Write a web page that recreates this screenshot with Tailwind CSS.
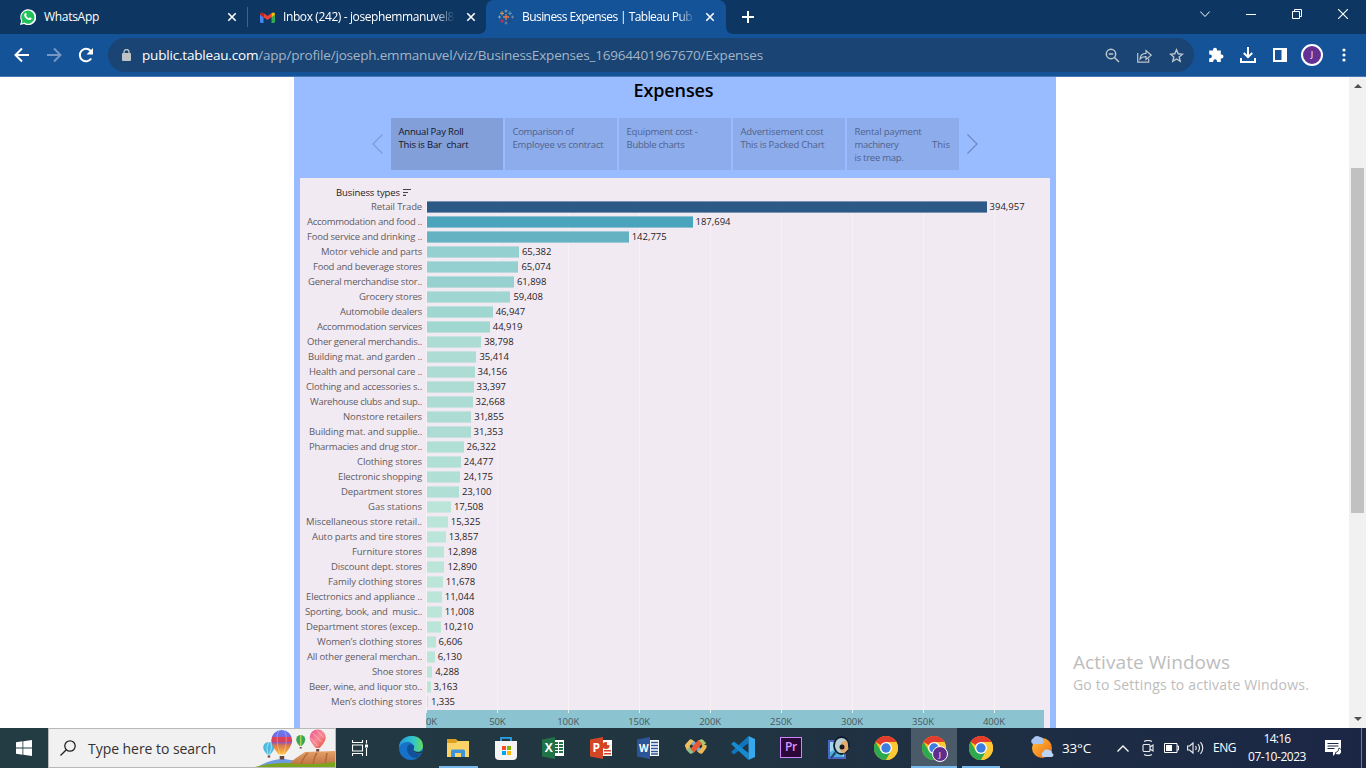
<!DOCTYPE html>
<html lang="en">
<head>
<meta charset="utf-8">
<title>Business Expenses | Tableau Public</title>
<script src="https://cdn.jsdelivr.net/npm/@tailwindcss/browser@4"></script>
</head>
<body class="w-[1366px] h-[768px] overflow-hidden bg-white font-['Open_Sans','Noto_Sans',sans-serif] text-white">
<svg class="hidden">
  <symbol id="close" viewBox="0 0 10 10"><path d="M1.3 1.3l7.4 7.4M8.7 1.3L1.3 8.7" stroke="currentColor" stroke-width="1.6" fill="none"/></symbol>
  <symbol id="chrome" viewBox="0 0 24 24">
    <circle cx="12" cy="12" r="12" fill="#fbc116"/>
    <path d="M12 12L1.6 6A12 12 0 0 1 22.4 6H12z" fill="#e33b2e"/>
    <path d="M1.6 6A12 12 0 0 0 12 24l5.2-9L12 12 6.8 15z" fill="#2da94f"/>
    <path d="M22.4 6A12 12 0 0 1 12 24l5.2-9A6 6 0 0 0 12 6z" fill="#fcc934"/>
    <circle cx="12" cy="12" r="6" fill="#fff"/><circle cx="12" cy="12" r="4.7" fill="#3c7de0"/>
  </symbol>
</svg>
<div class="flex flex-col w-[1366px] h-[768px]">

  <!-- Tab strip -->
  <header class="flex h-[34px] shrink-0 items-center bg-[#0d3662] text-[12px]">
    <div class="flex items-center w-[247px] h-full pl-5">
      <svg class="w-4 h-4 shrink-0" viewBox="0 0 16 16"><path d="M0 16l1.2-4A8 8 0 1 1 4 15z" fill="#fff"/><path d="M1.6 14.4l.8-2.6A6.6 6.6 0 1 1 4.2 13.6z" fill="#20c05a"/><path d="M5 4.2c.5-.5 1-.4 1.200 0l.6 1.400-.7 1c.6 1.300 1.500 2.100 2.800 2.600l.9-1 1.600.8c.3.200.2 1.300-.6 1.800C8.300 12.200 3.400 8 4.300 5.200z" fill="#fff"/></svg>
      <span class="ml-2" data-w="55">WhatsApp</span>
      <svg class="w-[10px] h-[10px] ml-auto mr-[10px]"><use href="#close"/></svg>
    </div>
    <div class="w-px h-5 bg-[#3f6286]"></div>
    <div class="flex items-center w-[238px] h-full pl-3">
      <svg class="w-[15px] h-[11px] shrink-0" viewBox="0 0 15 11"><path d="M0 2v7.500q0 1.500 1.500 1.500h2V4.500z" fill="#4285f4"/><path d="M15 2v7.500q0 1.500-1.500 1.500h-2V4.500z" fill="#34a853"/><path d="M3.500 1v4.200L7.500 8l4-2.800V1l-4 3z" fill="#ea4335"/><path d="M0 2.500C0 0 2 0 3.500 1v4.200L0 2.700z" fill="#c5221f"/><path d="M15 2.500C15 0 13 0 11.500 1v4.200L15 2.700z" fill="#fbbc04"/></svg>
      <div class="ml-2 w-[172px] overflow-hidden whitespace-nowrap [mask-image:linear-gradient(to_right,black_88%,transparent_100%)]"><span class="inline-block" data-w="171">Inbox (242) - josephemmanuvel8</span></div>
      <svg class="w-[10px] h-[10px] ml-auto mr-[10px]"><use href="#close"/></svg>
    </div>
    <div class="relative flex items-center w-[240px] h-full pl-[12px] rounded-t-lg bg-[#155399]">
      <svg class="absolute -left-2 bottom-0 w-2 h-2" viewBox="0 0 8 8"><path d="M8 0v8H0Q8 8 8 0z" fill="#155399"/></svg>
      <svg class="absolute -right-2 bottom-0 w-2 h-2" viewBox="0 0 8 8"><path d="M0 0v8h8Q0 8 0 0z" fill="#155399"/></svg>
      <svg class="w-4 h-4 shrink-0" viewBox="0 0 16 16" fill="none"><path d="M8 5v6M5 8h6" stroke="#f07840" stroke-width="1.300"/><path d="M4 2.300v4M2 4.300h4" stroke="#e9a24d"/><path d="M12 2.300v4M10 4.300h4" stroke="#5f9aab"/><path d="M4 10v4M2 12h4" stroke="#d52e46"/><path d="M12 10v4M10 12h4" stroke="#244775"/><path d="M8 .5v3M6.500 2h3M1.500 6.500v3M0 8h3" stroke="#8aa7ad"/><path d="M14.500 6.500v3M13 8h3M8 12.500v3M6.500 14h3" stroke="#7385a8"/></svg>
      <div class="ml-2 w-[172px] overflow-hidden whitespace-nowrap [mask-image:linear-gradient(to_right,black_90%,transparent_101%)]"><span class="inline-block" data-w="170">Business Expenses | Tableau Pub</span></div>
      <svg class="w-[10px] h-[10px] ml-auto mr-[11px]"><use href="#close"/></svg>
    </div>
    <svg class="w-3 h-3 ml-4" viewBox="0 0 12 12"><path d="M6 0v12M0 6h12" stroke="#fff" stroke-width="2"/></svg>
    <div class="flex items-center h-full ml-auto mr-[18px] pb-[6px] gap-[36px]">
      <svg class="w-[10px] h-[10px]" viewBox="0 0 10 10" fill="none" stroke="#fff"><path d="M.3 2.500L5 7.500l4.700-5"/></svg>
      <svg class="w-[10px] h-[10px]" viewBox="0 0 10 10"><path d="M0 5.500h10" stroke="#fff"/></svg>
      <svg class="w-[10px] h-[10px]" viewBox="0 0 10 10" fill="none" stroke="#fff"><path d="M.5 2.500h7v7h-7zM2.500 2.500v-2h7v7h-2"/></svg>
      <svg class="w-[10px] h-[10px]" viewBox="0 0 10 10"><path d="M0 0l10 10M10 0L0 10" stroke="#fff" stroke-width="1.100"/></svg>
    </div>
  </header>

  <!-- Toolbar -->
  <nav class="flex h-[43px] shrink-0 items-center border-b border-[#4779b8] bg-[#155399]">
    <svg class="w-4 h-4 ml-[14px]" viewBox="0 0 16 16" fill="none" stroke="#fff" stroke-width="2"><path d="M15 8H2M8 1.500L1.500 8 8 14.500"/></svg>
    <svg class="w-4 h-4 ml-4" viewBox="0 0 16 16" fill="none" stroke="#7398c5" stroke-width="2"><path d="M1 8h13M8 1.500L14.500 8 8 14.500"/></svg>
    <svg class="w-4 h-4 ml-4" viewBox="0 0 16 16" fill="none"><path d="M13.200 11.500A6.200 6.200 0 1 1 12.500 3.700L14 5.500" stroke="#fff" stroke-width="2"/><path d="M15 1v6.500H8.500z" fill="#fff"/></svg>
    <div class="flex items-center w-[1086px] h-[34px] ml-[14px] rounded-full bg-[#194473] text-[13.500px] text-[#a3b4c7]">
      <svg class="w-[9px] h-[12px] ml-[14px] shrink-0" viewBox="0 0 9 12"><rect y="4" width="9" height="8" rx="1" fill="#bfc3c8"/><path d="M2 4.500V3a2.500 2.500 0 0 1 5 0v1.500" fill="none" stroke="#bfc3c8" stroke-width="1.300"/></svg>
      <span class="ml-[11px] whitespace-nowrap" data-w="621"><span class="text-white">public.tableau.com</span>/app/profile/joseph.emmanuvel/viz/BusinessExpenses_16964401967670/Expenses</span>
      <div class="flex items-center gap-[17px] ml-auto mr-[10px]">
        <svg class="w-[15px] h-[15px]" viewBox="0 0 15 15" fill="none" stroke="#bdc5ce" stroke-width="1.500"><circle cx="6" cy="6" r="4.700"/><path d="M9.500 9.500l4.500 4.500M3.800 6h4.400"/></svg>
        <svg class="w-[15px] h-[15px]" viewBox="0 0 15 15" fill="none" stroke="#bdc5ce" stroke-width="1.200"><path d="M.7 5v9.200h11V10.500"/><path d="M3 11c.4-4 2.500-5.500 6-5.600V2.500l5.200 4.700L9 11.500V8.600C6.500 8.500 4.700 9 3 11z"/></svg>
        <svg class="w-[15px] h-[15px]" viewBox="0 0 15 15" fill="none" stroke="#bdc5ce" stroke-width="1.400"><path d="M7.500 1.800l1.700 4 4.300.4-3.300 2.800 1 4.300-3.700-2.300-3.700 2.300 1-4.300L1.500 6.200l4.300-.4z"/></svg>
      </div>
    </div>
    <svg class="w-4 h-4 ml-[14px]" viewBox="0 0 16 16"><path d="M1.200 3.500H5V2.800a2 2 0 0 1 4 0v.7h3.800v4h.7a2 2 0 0 1 0 4h-.7V15H9v-.8a1.900 1.900 0 0 0-3.800 0v.8h-4v-3.800H2a1.900 1.900 0 0 0 0-3.800h-.8z" fill="#fff"/></svg>
    <svg class="w-4 h-4 ml-4" viewBox="0 0 16 16" fill="none" stroke="#fff" stroke-width="2"><path d="M8 0v10M3.800 6L8 10.200 12.200 6M1 11v4h14v-4"/></svg>
    <svg class="w-[14px] h-[14px] ml-[17px]" viewBox="0 0 14 14"><path d="M0 0h14v14H0zM2 2v10h6.500V2z" fill="#fff" fill-rule="evenodd"/></svg>
    <div class="flex items-center justify-center w-[22px] h-[22px] ml-[14px] rounded-full border-2 border-white bg-[#643093] text-[9px]">J</div>
    <svg class="w-[4px] h-[14px] ml-[19px]" viewBox="0 0 4 14" fill="#fff"><circle cx="2" cy="2" r="1.600"/><circle cx="2" cy="7" r="1.600"/><circle cx="2" cy="12" r="1.600"/></svg>
  </nav>

  <!-- Page -->
  <main class="relative flex h-[651px] shrink-0 overflow-hidden bg-white">
    <section class="flex flex-col items-center w-[762px] h-full ml-[294px] bg-[#99bbff]">
      <h1 class="h-[41px] pr-[3px] text-[18px] leading-[26px] font-semibold text-black"><span class="inline-block" data-w="80">Expenses</span></h1>
      <div class="flex items-center h-[52px] text-[9.500px] leading-[13px] text-[#4f638b]">
        <svg class="w-[11px] h-5 mr-[8px]" viewBox="0 0 11 20" fill="none" stroke="#7f9ed7" stroke-width="1.400"><path d="M10.500.5L1 10l9.500 9.500"/></svg>
        <div class="flex gap-[2px] h-full whitespace-pre">
          <div class="w-[112px] pt-[7px] pl-[7.500px] bg-[#829fd9] text-[#10151f]"><div><span data-w="65">Annual Pay Roll</span></div><div><span data-w="70">This is Bar  chart</span></div></div>
          <div class="w-[112px] pt-[7px] pl-[7.500px] bg-[#8daceb]"><div><span data-w="61">Comparison of</span></div><div><span data-w="91">Employee vs contract</span></div></div>
          <div class="w-[112px] pt-[7px] pl-[7.500px] bg-[#8daceb]"><div><span data-w="71">Equipment cost -</span></div><div><span data-w="58">Bubble charts</span></div></div>
          <div class="w-[112px] pt-[7px] pl-[7.500px] bg-[#8daceb]"><div><span data-w="83">Advertisement cost</span></div><div><span data-w="84">This is Packed Chart</span></div></div>
          <div class="w-[112px] pt-[7px] pl-[7.500px] bg-[#8daceb]"><div><span data-w="67">Rental payment</span></div><div class="flex justify-between pr-[9px]"><span data-w="44">machinery</span><span data-w="18">This</span></div><div><span data-w="49">is tree map.</span></div></div>
        </div>
        <svg class="w-[11px] h-5 ml-[8px]" viewBox="0 0 11 20" fill="none" stroke="#708bc0" stroke-width="1.400"><path d="M.5.500L10 10 .5 19.500"/></svg>
      </div>
      <div class="flex flex-col w-[750px] flex-1 mt-2 bg-[#f2eaf3] text-[9.500px]">
        <div class="flex items-center h-[22px] pt-[8px] pl-9 text-[#222]"><span data-w="64">Business types</span>
          <svg class="w-2 h-2 ml-[3px] -mt-[2px]" viewBox="0 0 8 8" stroke="#444" stroke-width="1.200"><path d="M0 1.500h8M0 4.500h5M0 7.400h3"/></svg></div>
        <div class="relative h-[510px]">
          <div id="grid" class="absolute left-[126px] inset-y-0 w-[618px]"></div>
          <div id="rows" class="relative flex flex-col"></div>
        </div>
        <div class="flex-1 pl-[126px] pr-[6px]"><div id="axis" class="relative h-full overflow-hidden bg-[#8bc3d1] text-[#48575c]"></div></div>
      </div>
    </section>
    <aside class="absolute left-[1073px] top-[573px] text-[#bdbdbd] whitespace-nowrap">
      <div class="text-[19px] leading-[25px]"><span data-w="157">Activate Windows</span></div>
      <div class="text-[14px] leading-[20px]"><span data-w="236">Go to Settings to activate Windows.</span></div>
    </aside>
    <div class="flex flex-col items-center w-[17px] h-full ml-auto bg-[#f1f1f1]">
      <svg class="w-[8px] h-[4px] mt-[7px]" viewBox="0 0 8 4"><path d="M4 0l4 4H0z" fill="#505050"/></svg>
      <div class="w-[13px] h-[345px] mt-[80px] bg-[#c1c1c1]"></div>
      <svg class="w-[8px] h-[4px] mt-auto mb-[7px]" viewBox="0 0 8 4"><path d="M0 0h8L4 4z" fill="#505050"/></svg>
    </div>
  </main>

  <!-- Taskbar -->
  <footer class="flex h-10 shrink-0 items-center bg-linear-to-r from-[#233c43] via-[#213541] to-[#1b2645]">
    <div class="flex w-12 shrink-0 justify-center"><svg class="w-4 h-4" viewBox="0 0 16 16" fill="#fff"><path d="M0 2.200l6.500-.9v6.200H0zM7.300 1.200L16 0v7.500H7.300zM0 8.400h6.500v6.300L0 13.800zM7.300 8.400H16V16l-8.700-1.200z"/></svg></div>
    <div class="flex items-center w-[288px] shrink-0 h-full border border-[#b9b9b9] bg-[#f1f1f1] text-[#333] text-[14px]">
      <svg class="w-4 h-4 ml-[11px]" viewBox="0 0 16 16" fill="none" stroke="#222" stroke-width="1.300"><circle cx="10" cy="6" r="5.200"/><path d="M6.300 9.700L.5 15.500"/></svg>
      <span class="ml-[12px] whitespace-nowrap" data-w="128">Type here to search</span>
      <svg class="w-[80px] h-[38px] ml-auto" viewBox="0 0 80 38">
        <defs>
          <linearGradient id="hill" x1="0" x2="0" y1="0" y2="1"><stop stop-color="#e5a268"/><stop offset="1" stop-color="#b96c3c"/></linearGradient>
          <linearGradient id="big" x1="0" x2="0" y1="0" y2="1"><stop stop-color="#5c7cf5"/><stop offset=".28" stop-color="#7a68e0"/><stop offset=".3" stop-color="#e0434e"/><stop offset=".48" stop-color="#d64263"/><stop offset=".5" stop-color="#8b56b8"/><stop offset=".62" stop-color="#d9774a"/><stop offset="1" stop-color="#ffc23a"/></linearGradient>
          <linearGradient id="pink" x1="0" x2="1" y1="0" y2="1"><stop stop-color="#ee4f88"/><stop offset=".5" stop-color="#f58a9c"/><stop offset="1" stop-color="#e8502f"/></linearGradient>
        </defs>
        <path d="M2 38q14-8 27-8l20 3v5z" fill="#6e9ade"/><path d="M34 35q5-5 10-8l6-4 30-1v16H34z" fill="url(#hill)"/><path d="M46 36q2-8 7-12M58 36q1-8 4-12M70 36l2-12" stroke="#b5673b" stroke-width="1.500" fill="none"/>
        <path d="M0 38q14-4 32-4 24 3 48-1v5z" fill="#79a61d"/>
        <g transform="translate(1.200 0)">
        <path d="M7 18.500a5.500 5.500 0 0 1 11 0q0 3-4 7h-3q-4-4-4-7z" fill="#4db8e0"/><path d="M12.500 13q-3 5-1 12M15 14q1 5-1.500 11" stroke="#a5e2ee" fill="none"/><path d="M11.500 26.500h2.500v2h-2.500z" fill="#69423a"/>
        <path d="M15 11.500a10.500 10.500 0 0 1 21 0q0 5-7.500 14h-6q-7.500-9-7.500-14z" fill="url(#big)"/><path d="M22.500 1.500q-4 9 1.500 24M28.500 1.500q4 9-1.500 24" stroke="#fff" stroke-opacity=".3" fill="none"/><path d="M23.500 27h4.500v3.500h-4.500z" fill="#69423a"/>
        <path d="M40 10.500a4.500 4.500 0 0 1 9 0q0 3-3.500 6.500h-2q-3.500-3.500-3.500-6.500z" fill="#39a75a"/><path d="M44.500 6v11" stroke="#b5cf4a" stroke-width="1.500"/><path d="M43.500 18h2v1.500h-2z" fill="#69423a"/>
        <path d="M53.500 8.500a8 8 0 0 1 16 0q0 4-6 10.500h-4q-6-6.500-6-10.500z" fill="url(#pink)"/><path d="M56.500 4l9 9M60.500 1.500l7 7M54.500 9l7 8" stroke="#ffc0b8" stroke-opacity=".7"/><path d="M60 20h3v2.500h-3z" fill="#69423a"/>
        </g>
      </svg>
    </div>
    <div class="grid grid-cols-[repeat(14,47.550px)] h-full w-[669px] pl-[3.300px] shrink-0 *:flex *:items-center *:justify-center *:h-full">
      <div class="pr-[6px]"><svg class="w-4 h-4" viewBox="0 0 16 16" fill="none" stroke="#fff" stroke-width="1.100"><path d="M.5 0v2.500h10V0M.5 5h10v6H.5zM.5 16v-2.500h10V16M14.500 0v3.500M14.500 8v8"/><path d="M13 4.500h3v3h-3z" fill="#fff" stroke="none"/></svg></div>
      <div><svg class="w-6 h-6" viewBox="0 0 24 24"><defs><linearGradient id="eg" x1="0" x2="1"><stop stop-color="#2697dd"/><stop offset=".6" stop-color="#32c7c9"/><stop offset="1" stop-color="#66dc58"/></linearGradient></defs><circle cx="12" cy="12" r="12" fill="#1671c9"/><path d="M0 11C1-3 24-4 24 10c0 5-5 7-9 5-2-1 0-2 0-4C14 5 4 4 0 11z" fill="url(#eg)"/><path d="M8 13c0-4 3-6 6-4 2 1 1 3 .5 4-1 4 4 5.500 8 4-1 2-3 4-5 5-6 0-9.500-5-9.500-9z" fill="#12509b"/><path d="M14.500 13c-1 3.500 4 5.500 9 3.500v-1.500c-4 2-9 1-9-2z" fill="#233a43"/></svg></div>
      <div class="relative"><svg class="w-[22px] h-[18px]" viewBox="0 0 22 18"><path d="M0 0h9l2 2h11v15H0z" fill="#dba021"/><path d="M0 4h9l1.500-2H22v16H0z" fill="#fdd367"/><path d="M4 18v-6q0-1.500 1.500-1.500h11Q18 10.500 18 12v6h-4v-4H8v4z" fill="#3b94da"/></svg><i class="absolute left-[4.500px] bottom-0 w-[39px] h-[2px] bg-[#76b9ed]"></i></div>
      <div><svg class="w-6 h-6" viewBox="0 0 24 24"><path d="M7 6V1.800h10V6" fill="none" stroke="#2aa4e8" stroke-width="1.800"/><path d="M1 5h22v15q0 4-4 4H5q-4 0-4-4z" fill="#f4f4f4"/><path d="M8 10h4v4H8z" fill="#f25022"/><path d="M13 10h4v4h-4z" fill="#7fba00"/><path d="M8 15h4v4H8z" fill="#00a4ef"/><path d="M13 15h4v4h-4z" fill="#ffb900"/></svg></div>
      <div><div class="relative flex items-center w-[22px] h-[22px]"><svg class="absolute inset-0" viewBox="0 0 22 22"><path d="M11 3h11v16H11z" fill="#fff"/><path d="M13 5h3v2h-3zm4 0h4v2h-4zm-4 3h3v2h-3zm4 0h4v2h-4zm-4 3h3v2h-3zm4 0h4v2h-4zm-4 3h3v2h-3zm4 0h4v2h-4z" fill="#207347"/><path d="M0 2.500L13 0v22L0 19.500z" fill="#207347"/></svg><b class="relative w-[13px] text-center text-[12px]">X</b></div></div>
      <div><div class="relative flex items-center w-[22px] h-[22px]"><svg class="absolute inset-0" viewBox="0 0 22 22"><path d="M11 3h11v16H11z" fill="#fff"/><path d="M14 13h7v1.500h-7zm0 3h7v1.500h-7z" fill="#d24625"/><circle cx="16" cy="8.500" r="3.500" fill="#d24625"/><path d="M17 4.500V8h3.500z" fill="#fff"/><path d="M0 2.500L13 0v22L0 19.500z" fill="#d24625"/></svg><b class="relative w-[13px] text-center text-[12px]">P</b></div></div>
      <div><div class="relative flex items-center w-[22px] h-[22px]"><svg class="absolute inset-0" viewBox="0 0 22 22"><path d="M11 3h11v16H11z" fill="#fff"/><path d="M14 5.500h7M14 8.500h7M14 11.500h7M14 14.500h7M14 17h7" stroke="#2b579a" stroke-width="1.300"/><path d="M0 2.500L13 0v22L0 19.500z" fill="#2b579a"/></svg><b class="relative w-[13px] text-center text-[10px]">W</b></div></div>
      <div class="pb-[3px]"><svg class="w-6 h-[15px]" viewBox="0 0 24 16" fill="none" stroke-width="4.500" stroke-linejoin="round"><path d="M9 4.500L6.500 2.500 2.500 7l2 4.500" stroke="#efc05c"/><path d="M3.500 10l3 3.500L9 12" stroke="#8cc08a"/><path d="M15 4l3-1.500 3 3.500" stroke="#a8c971"/><path d="M21 6.500v2l-3.500 5-3-2" stroke="#efb850"/><path d="M8.500 3.500l7 8.500" stroke="#78a9d8"/><path d="M8 12.500l8.500-9.500" stroke="#e95a32" stroke-width="5.500"/></svg></div>
      <div><svg class="w-6 h-6" viewBox="0 0 24 24"><path d="M17.500 0v7L3 18.500 0 16z" fill="#0f75bd"/><path d="M17.500 24v-7L3 5.500 0 8z" fill="#168bd2"/><path d="M17.500 0L24 3v18l-6.500 3z" fill="#35a8ee"/></svg></div>
      <div class="pb-[2px]"><div class="flex items-center justify-center w-[22px] h-[21px] border border-[#d083ff] bg-[#2c0838] text-[#da94ff] text-[12px] font-semibold"><span data-w="12">Pr</span></div></div>
      <div class="pb-px"><svg class="w-6 h-6" viewBox="0 0 24 24"><path d="M1 4h18v19H1z" fill="#4d65c8"/><path d="M3 6h14v15H3z" fill="#9ed9ee"/><path d="M3 16l6-3 8 8H3z" fill="#4db1d4"/><ellipse cx="14.500" cy="9.500" rx="7.500" ry="8.500" fill="#b9cfd6" stroke="#101b2b" stroke-width="1.800"/><path d="M13 10q2-6 7-5l1.500 8-4.500 4.500q-5-2-4-7.500z" fill="#e2a86c"/><circle cx="15" cy="11" r="2.500" fill="#17191d"/><path d="M8.500 16.500L4 22" stroke="#27427c" stroke-width="2"/></svg></div>
      <div><svg class="w-6 h-6"><use href="#chrome"/></svg></div>
      <div class="relative"><i class="absolute left-[1px] top-0 w-[46px] h-full bg-[#4b5a68] border-b-2 border-[#76b9ed]"></i><svg class="relative w-6 h-6"><use href="#chrome"/></svg><span class="absolute left-[22px] top-[18px] flex items-center justify-center w-4 h-4 rounded-full border-[1.500px] border-white bg-[#5f2d8e] text-[8px]">J</span></div>
      <div class="relative"><svg class="w-6 h-6"><use href="#chrome"/></svg><i class="absolute left-[4.500px] bottom-0 w-[38px] h-[2px] bg-[#76b9ed]"></i></div>
    </div>
    <div class="flex items-center w-[361px] h-full pl-[25px] text-[12px] shrink-0 whitespace-nowrap">
      <svg class="w-6 h-6 shrink-0 -mt-[3px]" viewBox="0 0 24 24"><defs><linearGradient id="sun" x1="0" y1="0" x2="1" y2="1"><stop stop-color="#ffc33b"/><stop offset="1" stop-color="#ed6813"/></linearGradient></defs><circle cx="12" cy="13" r="10" fill="url(#sun)"/><path d="M3 9a3 3 0 0 1 0-5.500Q6-.5 10 2q3 0 3 3 2 3-1 4z" fill="#a9c6f1"/><path d="M13 22a3 3 0 0 1 0-5q2-4 6-2 3 0 3 3 3 2 0 4z" fill="#bcd3f5"/></svg>
      <span class="ml-2 text-[13.500px]" data-w="29">33°C</span>
      <svg class="w-3 h-[7px] ml-[26px] shrink-0" viewBox="0 0 12 7" fill="none" stroke="#fff" stroke-width="1.300"><path d="M.5 6.500L6 1l5.500 5.500"/></svg>
      <svg class="w-3 h-4 ml-[13px] shrink-0" viewBox="0 0 12 16" fill="none" stroke="#eee" stroke-width="1.100"><rect x="1" y="4.500" width="7" height="7" rx="1"/><path d="M8 7l3-2v6L8 9M2 1.500Q6-.5 10 1.500M2 14.500q4 2 8 0"/></svg>
      <svg class="w-[15px] h-[10px] ml-[10px] shrink-0" viewBox="0 0 15 10"><path d="M.5.500h12.500v9H.500zM13 3h1.500v4H13" fill="none" stroke="#fff"/><path d="M2 2h6v6H2z" fill="#fff"/></svg>
      <svg class="w-[17px] h-[14px] ml-[8px] shrink-0" viewBox="0 0 17 14" fill="none" stroke="#eee" stroke-width="1.100"><path d="M.6 5v4h2l3.400 3V2L2.600 5zM8.500 5q1.500 2 0 4M11 3q3 4 0 8M13.500 1.200q4.500 5.800 0 11.600"/></svg>
      <span class="ml-[9px]" data-w="23">ENG</span>
      <div class="flex flex-col items-center w-[58px] ml-[12px] mr-px leading-[18px]"><span data-w="27">14:16</span><span data-w="58">07-10-2023</span></div>
      <svg class="w-4 h-4 ml-[18px] shrink-0" viewBox="0 0 16 16"><path d="M0 0h16v12h-4l-4 4v-4H0z" fill="#fff"/><path d="M2.500 3.500h11M2.500 6h11M2.500 8.500h7" stroke="#1b2847"/><path d="M14 8a3.500 3.500 0 1 1-4 5q4-1 4-5z" fill="#fff" stroke="#1b2847" stroke-width=".8"/></svg>
      <div class="w-px h-full ml-5 bg-[#737b8e]"></div>
    </div>
  </footer>
</div>

<script>
// [label, label width, value, bar colour]
const data = [
  ["Retail Trade",51,394957,"#2c5985"],["Accommodation and food ..",115,187694,"#4ba4bd"],["Food service and drinking ..",115,142775,"#65b2c2"],
  ["Motor vehicle and parts",101,65382,"#94d0cf"],["Food and beverage stores",109,65074,"#94d0cf"],["General merchandise stor..",114,61898,"#97d1cf"],
  ["Grocery stores",63,59408,"#9fd6d1"],["Automobile dealers",82,46947,"#a1d7d1"],["Accommodation services",105,44919,"#a1d7d1"],
  ["Other general merchandis..",115,38798,"#addcd4"],["Building mat. and garden ..",114,35414,"#addcd4"],["Health and personal care ..",113,34156,"#addcd4"],
  ["Clothing and accessories s..",116,33397,"#addcd4"],["Warehouse clubs and sup..",112,32668,"#addcd4"],["Nonstore retailers",79,31855,"#addcd4"],
  ["Building mat. and supplie..",113,31353,"#addcd4"],["Pharmacies and drug stor..",113,26322,"#b0dfd5"],["Clothing stores",65,24477,"#b0dfd5"],
  ["Electronic shopping",84,24175,"#b0dfd5"],["Department stores",81,23100,"#b0dfd5"],["Gas stations",54,17508,"#bbe5d9"],
  ["Miscellaneous store retail..",116,15325,"#bbe5d9"],["Auto parts and tire stores",110,13857,"#bbe5d9"],["Furniture stores",70,12898,"#bbe5d9"],
  ["Discount dept. stores",91,12890,"#bbe5d9"],["Family clothing stores",94,11678,"#bbe5d9"],["Electronics and appliance ..",116,11044,"#bbe5d9"],
  ["Sporting, book, and  music..",117,11008,"#bbe5d9"],["Department stores (excep..",116,10210,"#bbe5d9"],["Women’s clothing stores",105,6606,"#bbe5d9"],
  ["All other general merchan..",115,6130,"#bbe5d9"],["Shoe stores",50,4288,"#bbe5d9"],["Beer, wine, and liquor sto..",113,3163,"#bbe5d9"],["Men’s clothing stores",91,1335,"#bbe5d9"]];
const scale = 560.5 / 394957;
document.getElementById("rows").innerHTML = data.map(([n, w, v, c]) => `
  <div class="flex items-start h-[15px] leading-[13px] whitespace-pre">
    <div class="flex justify-end w-[122px] text-[#5f5b60]"><span data-w="${w}">${n}</span></div>
    <div class="h-3 mt-px ml-[5px] shrink-0 border-y border-[#f2eaf3]/40" style="width:${(v * scale - .9).toFixed(1)}px;background-color:${c}"></div>
    <span class="ml-[3px] text-[#1f1c1f]" data-w="${v > 99999 ? 35 : v > 9999 ? 29.5 : 24}">${v.toLocaleString("en-US")}</span>
  </div>`).join("");
for (let i = 0; i <= 8; i++) {
  const x = 1 + i * 50000 * scale;
  document.getElementById("grid").insertAdjacentHTML("beforeend", `<i class="absolute inset-y-0 w-px bg-[#f5f1f4]" style="left:${Math.round(x - 1)}px"></i>`);
  document.getElementById("axis").insertAdjacentHTML("beforeend", `<i class="absolute top-0 w-px h-[3px] bg-[#e4eef1]" style="left:${Math.round(x - 1)}px"></i><div class="absolute top-[5px] w-10 flex justify-center leading-[13px]" style="left:${i ? x - 20.7 : -14.5}px"><span data-w="${i > 1 ? 22 : i ? 16 : 11}">${i * 50}K</span></div>`);
}
// Letter spacing is spread so that each text fills its width; rerun when the stylesheet changes the page size.
function fit() {
  const els = [...document.querySelectorAll("[data-w]")];
  els.forEach(e => { e.style.letterSpacing = "0px"; });
  const widths = els.map(e => e.getBoundingClientRect().width);
  els.forEach((e, i) => { e.style.letterSpacing = (e.dataset.w - widths[i]) / e.textContent.length + "px"; });
}
fit();
addEventListener("load", fit);
document.fonts.ready.then(fit);
new ResizeObserver(fit).observe(document.body);
new ResizeObserver(fit).observe(document.getElementById("rows"));
</script>
</body>
</html>
